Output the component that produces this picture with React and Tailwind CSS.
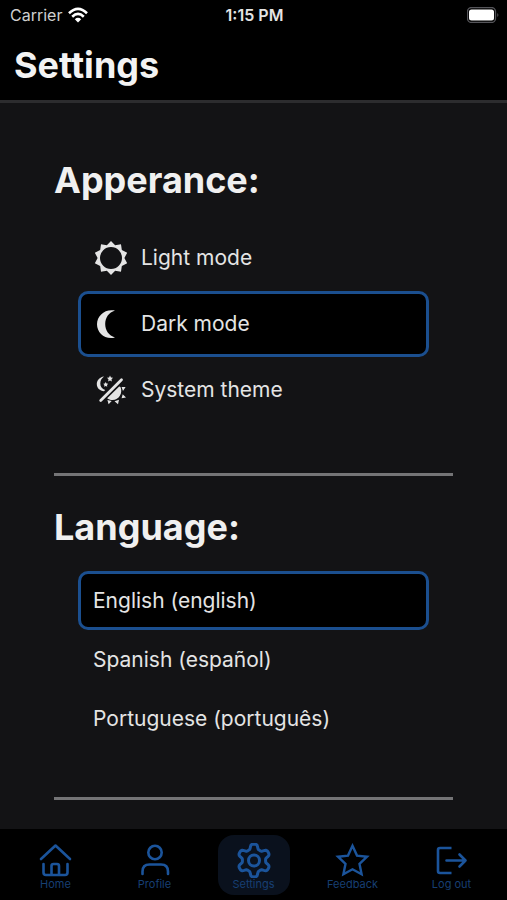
import { useState } from "react";

function starPath(cx, cy, outer, inner, points) {
  const out = [];
  for (let i = 0; i < points * 2; i++) {
    const r = i % 2 ? inner : outer;
    const a = (Math.PI * i) / points - Math.PI / 2;
    out.push(`${(cx + r * Math.cos(a)).toFixed(2)} ${(cy + r * Math.sin(a)).toFixed(2)}`);
  }
  return `M${out.join("L")}Z`;
}

function SunIcon() {
  return (
    <svg className="h-9 w-9" viewBox="0 0 36 36" fill="currentColor" aria-hidden="true">
      <path
        fillRule="evenodd"
        d={`${starPath(18, 18, 17, 13.4, 10)}M18 7a11 11 0 1 0 0 22a11 11 0 1 0 0-22Z`}
      />
    </svg>
  );
}

function MoonIcon() {
  return (
    <svg className="h-9 w-9" viewBox="0 0 36 36" fill="currentColor" aria-hidden="true">
      <path d="M22 4.500C12 2.500 4 9.500 4 18.200S12 34 22 31.500C15.800 29.500 12.200 24.500 12.200 18S15.800 6.500 22 4.500Z" />
    </svg>
  );
}

function SystemIcon() {
  return (
    <svg className="h-9 w-9" viewBox="0 0 36 36" fill="currentColor" aria-hidden="true">
      <path d="M11 4.500C6.500 5 3.800 8.500 3.800 12C3.800 15.800 6.800 19 11 19.200L12.200 18C9 17 7.300 14.600 7.300 11.600C7.300 8.500 8.600 6.200 11 4.500Z" />
      <path d={starPath(17, 6.8, 3.200, 1.600, 5)} />
      <path d={starPath(12.700, 12.6, 2.600, 1.400, 5)} />
      <path d="M28.500 7.800L7.700 28.600" stroke="currentColor" strokeWidth="2.800" strokeLinecap="round" />
      <path d="M27.500 15C30 21 26 28 19.500 28C17.300 28 15.500 27.300 14.200 26.200L26.200 14.400Z" />
      <path d="M28.600 15L32.600 15L30 19ZM29.700 22.200L33 25.400L28.600 26.300ZM26 27.800L25 32.300L21.500 29.200ZM18.700 29L15.600 32.300L14.400 28Z" />
    </svg>
  );
}

function HomeIcon() {
  return (
    <>
      <path d="M3 16L17.500 2.500L32 16" />
      <path d="M5.500 21V29.500Q5.500 32 8 32H27Q29.500 32 29.500 29.500V21" />
      <path d="M13.500 31.500V23Q13.500 21 15.500 21H19Q21 21 21 23V31.500" />
    </>
  );
}

function ProfileIcon() {
  return (
    <>
      <circle cx="18" cy="9.500" r="6.700" />
      <path d="M5.500 31V28.500Q5.500 21.500 12.500 21.500H24Q31 21.500 31 28.500V31" />
    </>
  );
}

function gearPath() {
  const out = [];
  const n = 96;
  for (let i = 0; i < n; i++) {
    const a = (2 * Math.PI * i) / n;
    const c = Math.cos(6 * a);
    const r = 14 + 2.500 * Math.tanh(2 * c);
    out.push(`${(18 + r * Math.sin(a)).toFixed(2)} ${(17.5 - r * Math.cos(a)).toFixed(2)}`);
  }
  return `M${out.join("L")}Z`;
}

function GearIcon() {
  return (
    <>
      <path d={gearPath()} strokeWidth="3" />
      <circle cx="18" cy="17.500" r="5.500" strokeWidth="3" />
    </>
  );
}

function StarIcon() {
  return (
    <path
      strokeWidth="2.400"
      strokeLinejoin="miter"
      d="M17.500 2.800L22 12.600L32 13.700L24.500 20.800L26.600 31.300L17.500 26.300L8.400 31.300L10.500 20.800L3 13.700L13 12.600Z"
    />
  );
}

function LogoutIcon() {
  return (
    <>
      <path d="M17.500 5H6Q4 5 4 7V28Q4 30 6 30H17.500" strokeLinecap="butt" />
      <path d="M12.500 17.500H31.500M25.500 11.500L31.500 17.500L25.500 23.500" />
    </>
  );
}

const themes = [
  { id: "light", label: "Light mode", Icon: SunIcon },
  { id: "dark", label: "Dark mode", Icon: MoonIcon },
  { id: "system", label: "System theme", Icon: SystemIcon },
];

const languages = [
  { id: "en", label: "English (english)" },
  { id: "es", label: "Spanish (español)" },
  { id: "pt", label: "Portuguese (português)" },
];

const tabs = [
  { label: "Home", Icon: HomeIcon },
  { label: "Profile", Icon: ProfileIcon },
  { label: "Settings", Icon: GearIcon, active: true },
  { label: "Feedback", Icon: StarIcon },
  { label: "Log out", Icon: LogoutIcon },
];

function Options({ name, items, value, onChange, rowClass }) {
  return (
    <div className="px-6">
      {items.map(({ id, label, Icon }) => (
        <label
          key={id}
          className={`relative flex cursor-pointer items-center gap-3 rounded-[10px] border-[3px] border-transparent px-3 text-[21px] leading-7 has-checked:border-[#1b4f8f] has-checked:bg-black ${rowClass}`}
        >
          <input
            type="radio"
            name={name}
            value={id}
            checked={value === id}
            onChange={() => onChange(id)}
            className="sr-only"
          />
          {Icon && <Icon />}
          <span>{label}</span>
        </label>
      ))}
    </div>
  );
}

export default function App() {
  const [theme, setTheme] = useState("dark");
  const [language, setLanguage] = useState("en");

  return (
    <div className="flex min-h-screen flex-col bg-[#131315] font-['Inter',sans-serif] text-[#e4e4e4]">
      <header className="border-b-[3px] border-[#2c2c2e] bg-black">
        <div className="grid h-[30px] grid-cols-3 items-center pr-2 pl-2.5 text-base leading-5">
          <div className="flex items-center gap-1.5 text-[#cfcfcf]">
            <span>Carrier</span>
            <svg className="h-4 w-5" viewBox="0 0 20 16" aria-label="Wi-Fi">
              <g fill="none" stroke="#fff" strokeWidth="2.600">
                <path d="M1 6.200Q10-2.500 19 6.200" />
                <path d="M4.200 9.700Q10 4.200 15.800 9.700" />
              </g>
              <path fill="#fff" d="M10 15.500L6.800 12.200Q10 9.500 13.200 12.200Z" />
            </svg>
          </div>
          <div className="text-center font-semibold">1:15 PM</div>
          <svg className="h-4 w-8 justify-self-end" viewBox="0 0 32 16" aria-label="Battery">
            <rect x="0.500" y="0.500" width="28" height="15" rx="4" fill="none" stroke="#55555a" strokeWidth="1.300" />
            <rect x="2" y="2.500" width="25" height="11" rx="2.500" fill="#fff" />
            <path d="M30.300 6Q32.500 8 30.300 10Z" fill="#55555a" />
          </svg>
        </div>
        <h1 className="px-3.5 pt-[13px] pb-[13px] text-4xl leading-[44px] font-bold text-[#f3f3f3]">Settings</h1>
      </header>

      <main className="flex-1 px-[54px]">
        <section className="border-b-[3px] border-[#747476] pt-[55px] pb-[50px]">
          <h2 className="mb-[23px] text-4xl leading-[44px] font-bold text-[#f0f0f0]">Apperance:</h2>
          <Options name="theme" items={themes} value={theme} onChange={setTheme} rowClass="h-[66px]" />
        </section>
        <section className="border-b-[3px] border-[#747476] pt-[29px] pb-[49px]">
          <h2 className="mb-[22px] text-4xl leading-[44px] font-bold text-[#f0f0f0]">Language:</h2>
          <Options name="language" items={languages} value={language} onChange={setLanguage} rowClass="h-[59px]" />
        </section>
      </main>

      <nav className="flex justify-around bg-black px-1.5 pt-1.5 pb-[5px]">
        {tabs.map(({ label, Icon, active }) => (
          <button
            key={label}
            type="button"
            aria-current={active ? "page" : undefined}
            className={`flex h-[60px] w-[72px] flex-col items-center rounded-2xl pt-2 text-[11px] leading-3 text-[#173f73] ${active ? "bg-[#0a111d]" : ""}`}
          >
            <svg
              className="h-[35px] w-[35px] shrink-0"
              viewBox="0 0 35 35"
              fill="none"
              stroke="#1b549b"
              strokeWidth="2.600"
              strokeLinecap="round"
              strokeLinejoin="round"
              aria-hidden="true"
            >
              <Icon />
            </svg>
            <span className="whitespace-nowrap">{label}</span>
          </button>
        ))}
      </nav>
    </div>
  );
}
